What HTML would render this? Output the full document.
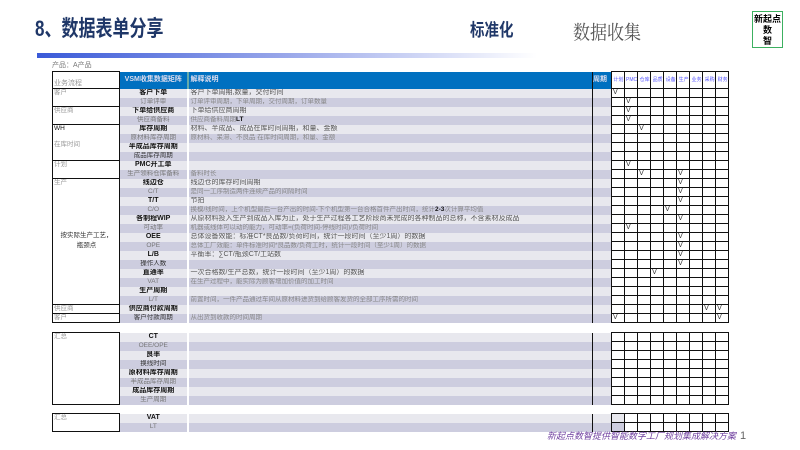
<!DOCTYPE html>
<html><head><meta charset="utf-8"><style>
*{margin:0;padding:0;box-sizing:border-box}
body{width:800px;height:450px;background:#fff;position:relative;overflow:hidden;font-family:"Liberation Sans","Noto Sans CJK SC",sans-serif}
.title{position:absolute;left:35px;top:10px;font-size:17px;font-weight:bold;color:#1f3768;transform:scaleY(1.3);transform-origin:left top;white-space:nowrap}
.std{position:absolute;left:470px;top:17px;font-size:14.5px;font-weight:bold;color:#1f3768;transform:scaleY(1.2);transform-origin:left top}
.coll{position:absolute;left:573px;top:16px;font-size:17px;color:#555;font-family:"Liberation Serif","Noto Serif CJK SC",serif;transform:scaleY(1.15);transform-origin:left top}
.logo{position:absolute;left:752px;top:11px;width:31px;height:37px;border:1.5px solid #3cb060;font-size:9px;line-height:11px;text-align:center;color:#000;padding-top:2px;font-weight:bold}
.bar{position:absolute;left:37px;top:53px;width:500px;height:5px;background:linear-gradient(90deg,#3a5ad8,#9aa8ea 50%,#fff)}
.prod{position:absolute;left:52px;top:60px;font-size:7px;color:#777}
table{position:absolute;left:52px;border-collapse:collapse;table-layout:fixed;font-size:6.5px}
td{height:9px;line-height:8px;padding:0;overflow:hidden;white-space:nowrap;border:0}
.l{background:#fff;border:1.5px solid #111;color:#999;vertical-align:top;padding-left:1px;width:67px}
.v{text-align:center;border-right:2px solid #fff;width:68px}
.d{padding-left:2px;color:#555;width:405px}
.p{border-left:1.5px solid #111;width:19px}
.c{border:1px solid #111;background:#fff;width:13px;color:#333;font-size:7px;padding-left:1px}
tr.a .v,tr.a .d,tr.a .p{background:#e8e8ee}
tr.b .v,tr.b .d,tr.b .p{background:#cdcddf}
tr.a .v{color:#111;font-weight:bold;font-size:7px}
tr.b .v{color:#777}
tr.a .d{color:#555;font-size:7px}
tr.b .d{color:#888}
tr.h td{background:#0070c0;color:#dde;font-weight:bold;height:17px;font-size:7px}
tr.h td.l{background:#fff;color:#999;font-weight:normal;vertical-align:bottom}
tr.h .c{background:#fff;color:#55f;font-weight:normal;font-size:5px;text-align:center}
.foot{position:absolute;left:547px;top:429px;font-size:9px;color:#7040a0;font-style:italic}
.foot span{color:#666;font-style:normal;font-size:11px;margin-left:4px}
</style></head><body>
<div class="title">8、数据表单分享</div>
<div class="std">标准化</div>
<div class="coll">数据收集</div>
<div class="logo">新起点<br>数<br>智</div>
<div class="bar"></div>
<div class="prod">产品：A产品</div>

<table style="top:71px">
<tr class="h"><td class="l">业务流程</td><td class="v" style="border-right:2px solid #6aa">VSM收集数据矩阵</td><td class="d" style="color:#dde">解释说明</td><td class="p">周期</td><td class="c">计划</td><td class="c">PMC</td><td class="c">仓库</td><td class="c">品质</td><td class="c">设备</td><td class="c">生产</td><td class="c">业务</td><td class="c">采购</td><td class="c">财务</td></tr>
<tr class="a"><td class="l" rowspan="2">客户</td><td class="v">客户下单</td><td class="d">客户下单周期,数量，交付时间</td><td class="p"></td><td class="c">V</td><td class="c"></td><td class="c"></td><td class="c"></td><td class="c"></td><td class="c"></td><td class="c"></td><td class="c"></td><td class="c"></td></tr>
<tr class="b"><td class="v">订单评审</td><td class="d">订单评审周期，下单周期，交付周期，订单数量</td><td class="p"></td><td class="c"></td><td class="c">V</td><td class="c"></td><td class="c"></td><td class="c"></td><td class="c"></td><td class="c"></td><td class="c"></td><td class="c"></td></tr>
<tr class="a"><td class="l" rowspan="2">供应商</td><td class="v">下单给供应商</td><td class="d">下单给供应商周期</td><td class="p"></td><td class="c"></td><td class="c">V</td><td class="c"></td><td class="c"></td><td class="c"></td><td class="c"></td><td class="c"></td><td class="c"></td><td class="c"></td></tr>
<tr class="b"><td class="v">供应商备料</td><td class="d">供应商备料周期<b style="color:#111">LT</b></td><td class="p"></td><td class="c"></td><td class="c">V</td><td class="c"></td><td class="c"></td><td class="c"></td><td class="c"></td><td class="c"></td><td class="c"></td><td class="c"></td></tr>
<tr class="a"><td class="l" rowspan="4"><span style="color:#111">WH</span><br><br>在库时间</td><td class="v">库存周期</td><td class="d">材料、半成品、成品在库时间周期，和量、金额</td><td class="p"></td><td class="c"></td><td class="c"></td><td class="c">V</td><td class="c"></td><td class="c"></td><td class="c"></td><td class="c"></td><td class="c"></td><td class="c"></td></tr>
<tr class="b"><td class="v">原材料库存周期</td><td class="d">原材料、呆滞、不良品 在库时间周期，和量、金额</td><td class="p"></td><td class="c"></td><td class="c"></td><td class="c"></td><td class="c"></td><td class="c"></td><td class="c"></td><td class="c"></td><td class="c"></td><td class="c"></td></tr>
<tr class="a"><td class="v">半成品库存周期</td><td class="d"></td><td class="p"></td><td class="c"></td><td class="c"></td><td class="c"></td><td class="c"></td><td class="c"></td><td class="c"></td><td class="c"></td><td class="c"></td><td class="c"></td></tr>
<tr class="b"><td class="v" style="color:#333">成品库存周期</td><td class="d"></td><td class="p"></td><td class="c"></td><td class="c"></td><td class="c"></td><td class="c"></td><td class="c"></td><td class="c"></td><td class="c"></td><td class="c"></td><td class="c"></td></tr>
<tr class="a"><td class="l" rowspan="2">计划</td><td class="v">PMC开工单</td><td class="d"></td><td class="p"></td><td class="c"></td><td class="c">V</td><td class="c"></td><td class="c"></td><td class="c"></td><td class="c"></td><td class="c"></td><td class="c"></td><td class="c"></td></tr>
<tr class="b"><td class="v">生产领料仓库备料</td><td class="d">备料时长</td><td class="p"></td><td class="c"></td><td class="c"></td><td class="c">V</td><td class="c"></td><td class="c"></td><td class="c">V</td><td class="c"></td><td class="c"></td><td class="c"></td></tr>
<tr class="a"><td class="l" rowspan="14">生产<div style="margin-top:44px;color:#333;text-align:center;line-height:10px">按实际生产工艺，<br>瓶颈点</div></td><td class="v">线边仓</td><td class="d">线边仓的库存时间周期</td><td class="p"></td><td class="c"></td><td class="c"></td><td class="c"></td><td class="c"></td><td class="c"></td><td class="c">V</td><td class="c"></td><td class="c"></td><td class="c"></td></tr>
<tr class="b"><td class="v">C/T</td><td class="d">是同一工序制造两件连续产品的间隔时间</td><td class="p"></td><td class="c"></td><td class="c"></td><td class="c"></td><td class="c"></td><td class="c"></td><td class="c">V</td><td class="c"></td><td class="c"></td><td class="c"></td></tr>
<tr class="a"><td class="v">T/T</td><td class="d">节拍</td><td class="p"></td><td class="c"></td><td class="c"></td><td class="c"></td><td class="c"></td><td class="c"></td><td class="c">V</td><td class="c"></td><td class="c"></td><td class="c"></td></tr>
<tr class="b"><td class="v">C/O</td><td class="d">换模/线时间，上个机型最后一台产出的时间-下个机型第一台合格首件产出时间，统计<b style="color:#111">2-3</b>次计算平均值</td><td class="p"></td><td class="c"></td><td class="c"></td><td class="c"></td><td class="c"></td><td class="c">V</td><td class="c"></td><td class="c"></td><td class="c"></td><td class="c"></td></tr>
<tr class="a"><td class="v">各制程WIP</td><td class="d">从原材料投入生产到成品入库为止，处于生产过程各工艺阶段尚未完成的各种制品的总称，不含素材及成品</td><td class="p"></td><td class="c"></td><td class="c"></td><td class="c"></td><td class="c"></td><td class="c"></td><td class="c">V</td><td class="c"></td><td class="c"></td><td class="c"></td></tr>
<tr class="b"><td class="v">可动率</td><td class="d">机器或线体可以动的能力，可动率=(负荷时间-停线时间)/负荷时间</td><td class="p"></td><td class="c"></td><td class="c">V</td><td class="c"></td><td class="c"></td><td class="c"></td><td class="c"></td><td class="c"></td><td class="c"></td><td class="c"></td></tr>
<tr class="a"><td class="v">OEE</td><td class="d">总体设备效能：标准CT*良品数/负荷时间，统计一段时间（至少1周）的数据</td><td class="p"></td><td class="c"></td><td class="c"></td><td class="c"></td><td class="c"></td><td class="c"></td><td class="c">V</td><td class="c"></td><td class="c"></td><td class="c"></td></tr>
<tr class="b"><td class="v">OPE</td><td class="d">总体工厂效能：单件标准时间*良品数/负荷工时，统计一段时间（至少1周）的数据</td><td class="p"></td><td class="c"></td><td class="c"></td><td class="c"></td><td class="c"></td><td class="c"></td><td class="c">V</td><td class="c"></td><td class="c"></td><td class="c"></td></tr>
<tr class="a"><td class="v">L/B</td><td class="d">平衡率：∑CT/瓶颈CT/工站数</td><td class="p"></td><td class="c"></td><td class="c"></td><td class="c"></td><td class="c"></td><td class="c"></td><td class="c">V</td><td class="c"></td><td class="c"></td><td class="c"></td></tr>
<tr class="b"><td class="v" style="color:#333">操作人数</td><td class="d"></td><td class="p"></td><td class="c"></td><td class="c"></td><td class="c"></td><td class="c"></td><td class="c"></td><td class="c">V</td><td class="c"></td><td class="c"></td><td class="c"></td></tr>
<tr class="a"><td class="v">直通率</td><td class="d">一次合格数/生产总数，统计一段时间（至少1周）的数据</td><td class="p"></td><td class="c"></td><td class="c"></td><td class="c"></td><td class="c">V</td><td class="c"></td><td class="c"></td><td class="c"></td><td class="c"></td><td class="c"></td></tr>
<tr class="b"><td class="v">VAT</td><td class="d">在生产过程中，能实际为顾客增加价值的加工时间</td><td class="p"></td><td class="c"></td><td class="c"></td><td class="c"></td><td class="c"></td><td class="c"></td><td class="c"></td><td class="c"></td><td class="c"></td><td class="c"></td></tr>
<tr class="a"><td class="v">生产周期</td><td class="d"></td><td class="p"></td><td class="c"></td><td class="c"></td><td class="c"></td><td class="c"></td><td class="c"></td><td class="c"></td><td class="c"></td><td class="c"></td><td class="c"></td></tr>
<tr class="b"><td class="v">L/T</td><td class="d">前置时间，一件产品通过车间从原材料进货到给顾客发货的全部工序所需的时间</td><td class="p"></td><td class="c"></td><td class="c"></td><td class="c"></td><td class="c"></td><td class="c"></td><td class="c"></td><td class="c"></td><td class="c"></td><td class="c"></td></tr>
<tr class="a"><td class="l">供应商</td><td class="v">供应商付款周期</td><td class="d"></td><td class="p"></td><td class="c"></td><td class="c"></td><td class="c"></td><td class="c"></td><td class="c"></td><td class="c"></td><td class="c"></td><td class="c">V</td><td class="c">V</td></tr>
<tr class="b"><td class="l">客户</td><td class="v" style="color:#333">客户付款周期</td><td class="d">从出货到收款的时间周期</td><td class="p"></td><td class="c">V</td><td class="c"></td><td class="c"></td><td class="c"></td><td class="c"></td><td class="c"></td><td class="c"></td><td class="c"></td><td class="c">V</td></tr>
</table>

<table style="top:332px">
<tr class="a"><td class="l" rowspan="8">汇总</td><td class="v">CT</td><td class="d"></td><td class="p"></td><td class="c"></td><td class="c"></td><td class="c"></td><td class="c"></td><td class="c"></td><td class="c"></td><td class="c"></td><td class="c"></td><td class="c"></td></tr>
<tr class="b"><td class="v">OEE/OPE</td><td class="d"></td><td class="p"></td><td class="c"></td><td class="c"></td><td class="c"></td><td class="c"></td><td class="c"></td><td class="c"></td><td class="c"></td><td class="c"></td><td class="c"></td></tr>
<tr class="a"><td class="v">良率</td><td class="d"></td><td class="p"></td><td class="c"></td><td class="c"></td><td class="c"></td><td class="c"></td><td class="c"></td><td class="c"></td><td class="c"></td><td class="c"></td><td class="c"></td></tr>
<tr class="b"><td class="v" style="color:#333">换线时间</td><td class="d"></td><td class="p"></td><td class="c"></td><td class="c"></td><td class="c"></td><td class="c"></td><td class="c"></td><td class="c"></td><td class="c"></td><td class="c"></td><td class="c"></td></tr>
<tr class="a"><td class="v">原材料库存周期</td><td class="d"></td><td class="p"></td><td class="c"></td><td class="c"></td><td class="c"></td><td class="c"></td><td class="c"></td><td class="c"></td><td class="c"></td><td class="c"></td><td class="c"></td></tr>
<tr class="b"><td class="v">半成品库存周期</td><td class="d"></td><td class="p"></td><td class="c"></td><td class="c"></td><td class="c"></td><td class="c"></td><td class="c"></td><td class="c"></td><td class="c"></td><td class="c"></td><td class="c"></td></tr>
<tr class="a"><td class="v">成品库存周期</td><td class="d"></td><td class="p"></td><td class="c"></td><td class="c"></td><td class="c"></td><td class="c"></td><td class="c"></td><td class="c"></td><td class="c"></td><td class="c"></td><td class="c"></td></tr>
<tr class="b"><td class="v">生产周期</td><td class="d"></td><td class="p"></td><td class="c"></td><td class="c"></td><td class="c"></td><td class="c"></td><td class="c"></td><td class="c"></td><td class="c"></td><td class="c"></td><td class="c"></td></tr>
</table>

<table style="top:413px">
<tr class="a"><td class="l" rowspan="2">汇总</td><td class="v">VAT</td><td class="d"></td><td class="p"></td><td class="c" style="background:#e8e8ee"></td><td class="c"></td><td class="c"></td><td class="c"></td><td class="c"></td><td class="c"></td><td class="c"></td><td class="c"></td><td class="c"></td></tr>
<tr class="b"><td class="v">LT</td><td class="d"></td><td class="p"></td><td class="c" style="background:#cdcddf"></td><td class="c"></td><td class="c"></td><td class="c"></td><td class="c"></td><td class="c"></td><td class="c"></td><td class="c"></td><td class="c"></td></tr>
</table>

<div class="foot">新起点数智提供智能数字工厂规划集成解决方案<span>1</span></div>
</body></html>
